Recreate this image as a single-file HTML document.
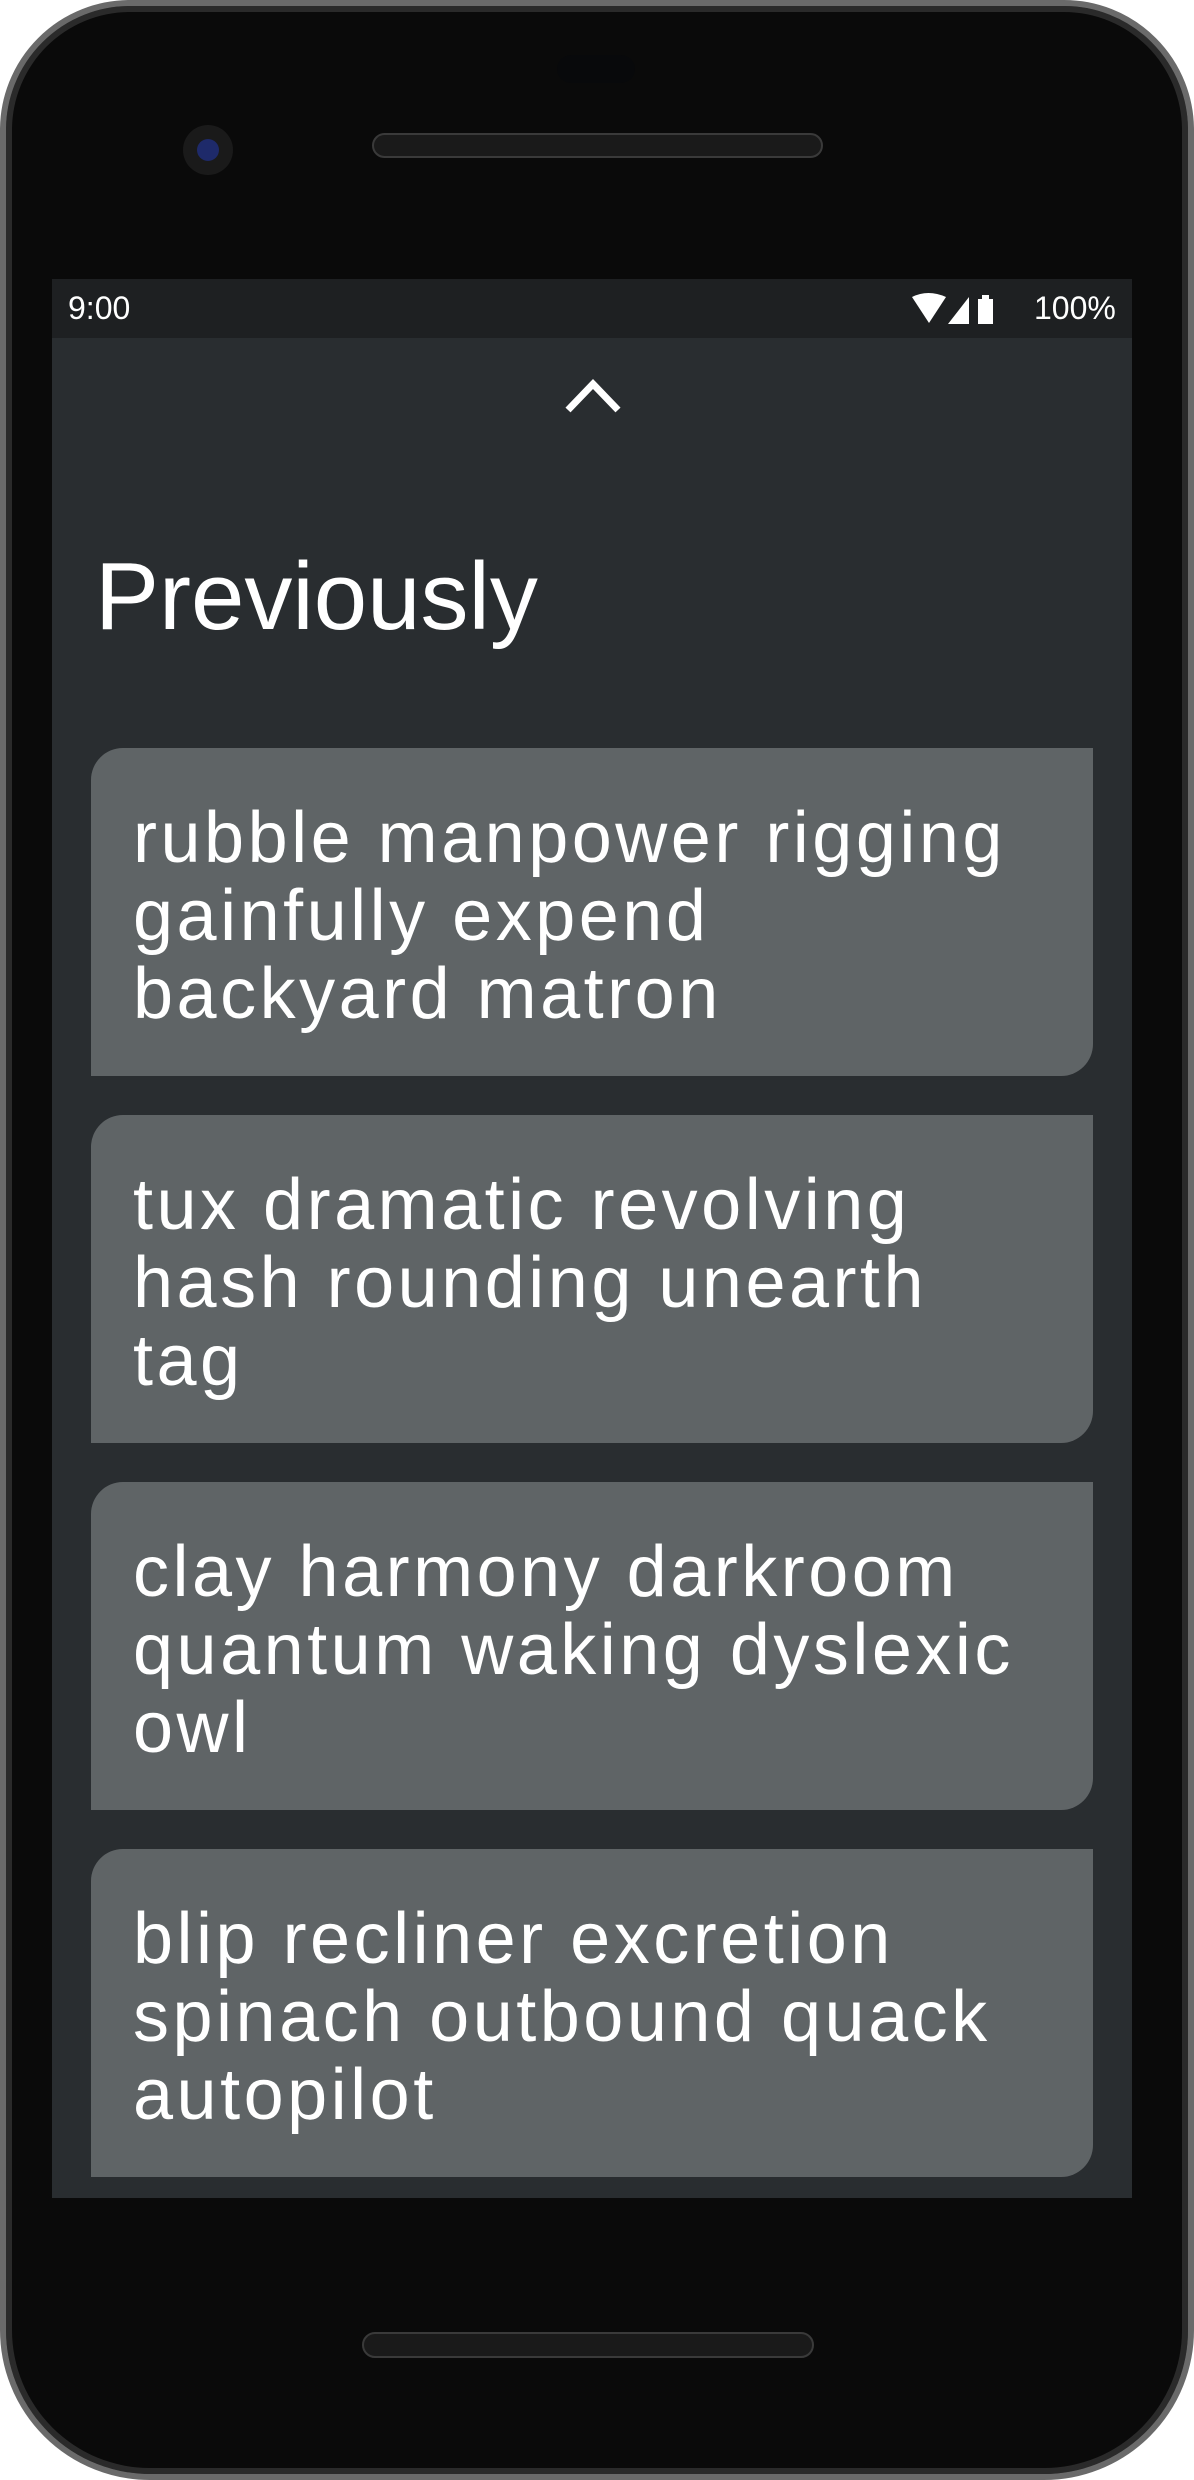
<!DOCTYPE html>
<html><head><meta charset="utf-8"><style>
*{margin:0;padding:0;box-sizing:border-box}
body{width:1194px;height:2480px;background:#fff;position:relative;overflow:hidden;font-family:"Liberation Sans",sans-serif}
.phone{position:absolute;left:0;top:0;width:1194px;height:2480px;background:#0a0a0a;border-radius:130px 130px 150px 150px;border:6px solid #6a6a6a;box-shadow:inset 0 0 0 6px #2a2a2a}
.screen{position:absolute;left:52px;top:279px;width:1080px;height:1919px;background:#292d30}
.status{position:absolute;left:0;top:0;width:1080px;height:59px;background:#1e2022;color:#fff;font-size:32px}
.card{position:absolute;left:39px;width:1002px;height:328px;background:#5f6466;border-radius:32px 0 32px 0;padding:51px 0 0 42px;color:#fff;font-size:72px;line-height:78px;letter-spacing:3.5px}
.h{position:absolute;left:43px;top:268px;color:#fff;font-size:96px;line-height:100px}
</style></head><body>
<div class="phone"></div>
<div style="position:absolute;left:557px;top:55px;width:78px;height:28px;border-radius:14px;background:#08090b"></div>
<div style="position:absolute;left:372px;top:133px;width:451px;height:25px;border-radius:13px;background:#1a1a1a;border:2px solid #3a3a3a"></div>
<div style="position:absolute;left:183px;top:125px;width:50px;height:50px;border-radius:50%;background:#1a1a1a"><div style="position:absolute;left:14px;top:14px;width:22px;height:22px;border-radius:50%;background:#1e2a6a"></div></div>
<div style="position:absolute;left:362px;top:2332px;width:452px;height:26px;border-radius:13px;background:#1a1a1a;border:2px solid #3a3a3a"></div>
<div class="screen">
<div class="status"><span style="position:absolute;left:16px;top:11px">9:00</span>
<svg style="position:absolute;left:858px;top:14px" width="120" height="34" viewBox="0 0 120 34">
<path d="M2 4 Q18 -4 36 4 L19 30 Z" fill="#fff"/><path d="M38 31 L59 4 L59 31 Z" fill="#fff"/><rect x="68" y="6" width="15" height="25" fill="#fff"/><rect x="72" y="2" width="7" height="5" fill="#fff"/></svg>
<span style="position:absolute;left:982px;top:11px">100%</span></div>
<svg style="position:absolute;left:512px;top:99px" width="58" height="38" viewBox="0 0 58 38"><path d="M4 32 L29 6 L54 32" fill="none" stroke="#fff" stroke-width="7"/></svg>
<div class="h">Previously</div>
<div class="card" style="top:469px">rubble manpower rigging<br>gainfully expend<br>backyard matron</div>
<div class="card" style="top:836px">tux dramatic revolving<br>hash rounding unearth<br>tag</div>
<div class="card" style="top:1203px">clay harmony darkroom<br>quantum waking dyslexic<br>owl</div>
<div class="card" style="top:1570px">blip recliner excretion<br>spinach outbound quack<br>autopilot</div>
</div>
</body></html>
